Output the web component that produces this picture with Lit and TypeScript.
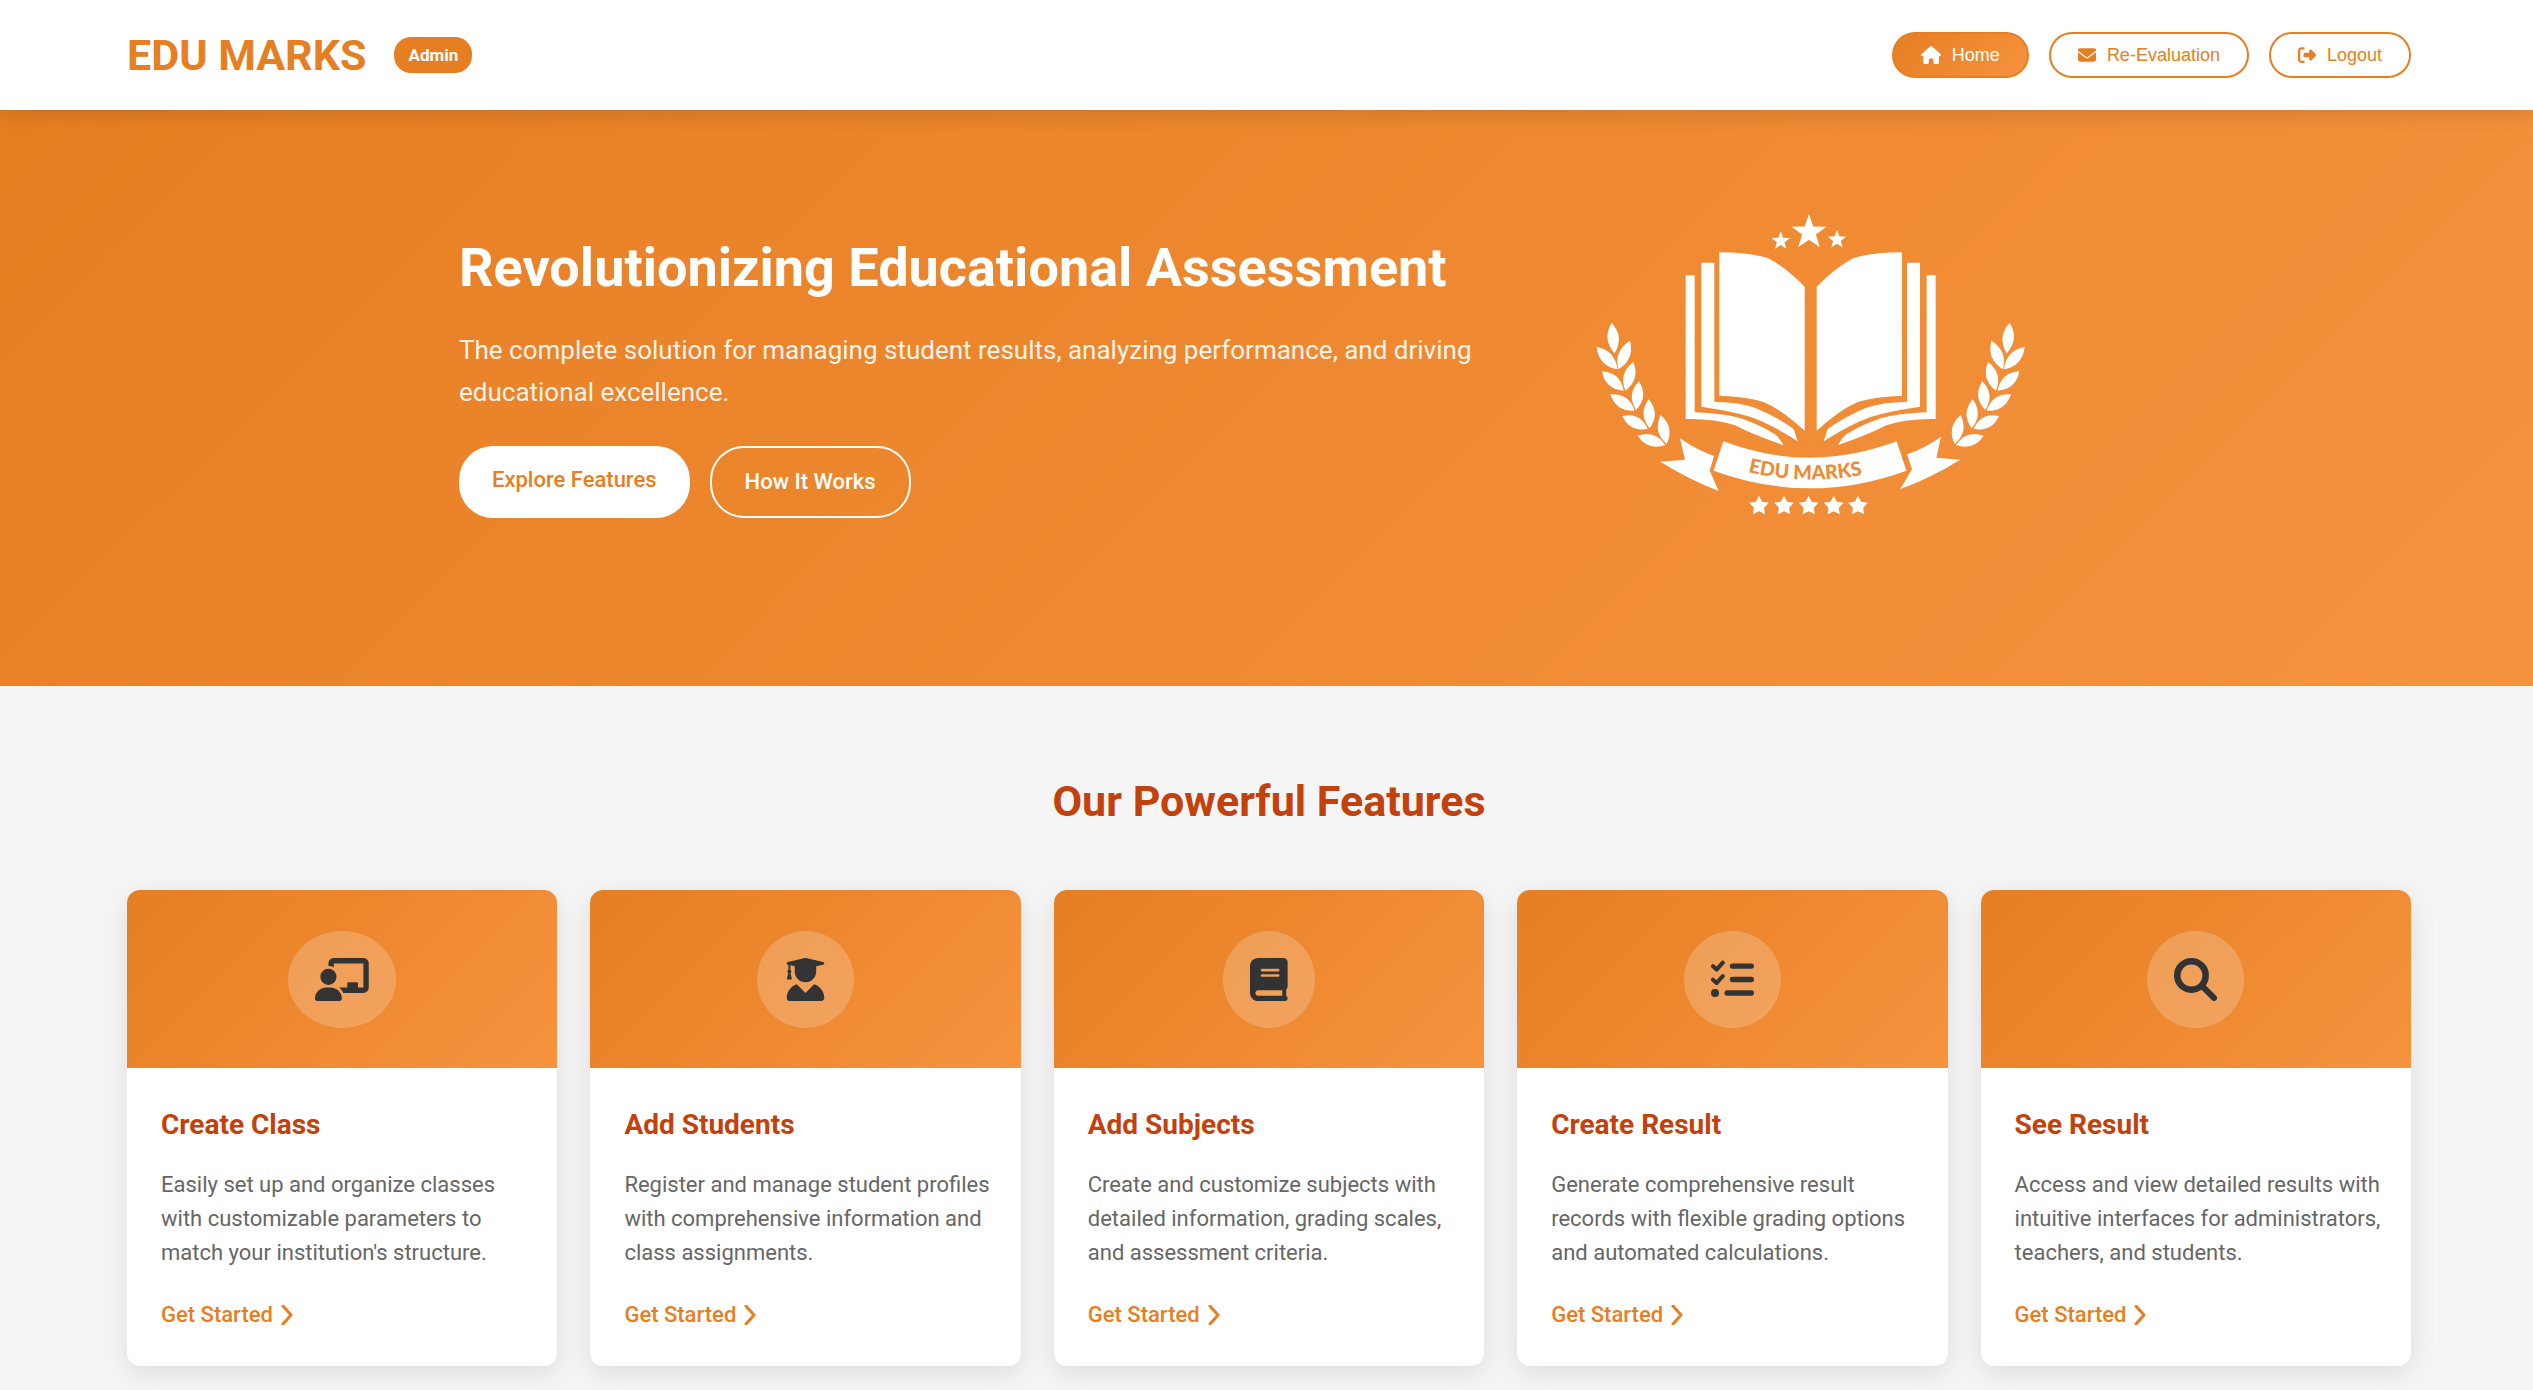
import { LitElement, html, css, svg } from "lit";
import type { SVGTemplateResult } from "lit";
import { customElement, property } from "lit/decorators.js";

type Point = [number, number];

interface Glyph {
  width: number;
  art: SVGTemplateResult;
}

const glyphs: Record<string, Glyph> = {
  house: {
    width: 576,
    art: svg`<path d="M575.8 255.5c0 18-15 32.1-32 32.1h-32l.7 160.2c0 2.7-.2 5.4-.5 8.1V472c0 22.1-17.9 40-40 40H456c-1.1 0-2.2 0-3.3-.1c-1.4 .1-2.8 .1-4.2 .1H416 392c-22.1 0-40-17.9-40-40V448 384c0-17.7-14.3-32-32-32H256c-17.7 0-32 14.3-32 32v64 24c0 22.1-17.9 40-40 40H160 128.1c-1.5 0-3-.1-4.5-.2c-1.2 .1-2.4 .2-3.6 .2H104c-22.1 0-40-17.9-40-40V360c0-.9 0-1.9 .1-2.8V287.6H32c-18 0-32-14-32-32.1c0-9 3-17 10-24L266.4 8c7-7 15-8 22-8s15 2 21 7L564.8 231.5c8 7 12 15 11 24z"/>`,
  },
  envelope: {
    width: 512,
    art: svg`<path d="M48 64C21.5 64 0 85.5 0 112c0 15.1 7.1 29.3 19.2 38.4L236.8 313.6c11.4 8.5 27 8.5 38.4 0L492.8 150.4c12.1-9.1 19.2-23.3 19.2-38.4c0-26.5-21.5-48-48-48H48zM0 176V384c0 35.3 28.7 64 64 64H448c35.3 0 64-28.7 64-64V176L294.4 339.2c-22.8 17.1-54 17.1-76.8 0L0 176z"/>`,
  },
  exit: {
    width: 512,
    art: svg`<path d="M377.9 105.9L500.7 228.7c7.2 7.2 11.3 17.1 11.3 27.3s-4.1 20.1-11.3 27.3L377.9 406.1c-6.4 6.4-15 9.9-24 9.9c-18.7 0-33.9-15.2-33.9-33.9l0-62.1-128 0c-17.7 0-32-14.3-32-32l0-64c0-17.7 14.3-32 32-32l128 0 0-62.1c0-18.7 15.2-33.9 33.9-33.9c9 0 17.6 3.6 24 9.9zM160 96L96 96c-17.7 0-32 14.3-32 32l0 256c0 17.7 14.3 32 32 32l64 0c17.7 0 32 14.3 32 32s-14.3 32-32 32l-64 0c-53 0-96-43-96-96L0 128C0 75 43 32 96 32l64 0c17.7 0 32 14.3 32 32s-14.3 32-32 32z"/>`,
  },
  teacher: {
    width: 640,
    art: svg`<path d="M160 64c0-35.3 28.7-64 64-64H576c35.3 0 64 28.7 64 64V352c0 35.3-28.7 64-64 64H336.8c-11.8-25.5-29.9-47.5-52.4-64H384V304c0-8.8 7.2-16 16-16h96c8.800 0 16 7.200 16 16v48h64V64L224 64v49.1C205.2 102.2 183.3 96 160 96V64zm0 64a96 96 0 1 1 0 192 96 96 0 1 1 0-192zM133.3 352h53.3C260.3 352 320 411.7 320 485.3c0 14.7-11.9 26.7-26.7 26.7H26.7C11.9 512 0 500.1 0 485.3C0 411.7 59.7 352 133.3 352z"/>`,
  },
  graduate: {
    width: 512,
    art: svg`<path d="M45.63 79.75L52 81.25v58.5C45 143.9 40 151.3 40 160c0 8.375 4.625 15.38 11.12 19.75L35.5 242C33.75 248.9 37.63 256 43.13 256h41.75c5.5 0 9.375-7.125 7.625-13.1L76.88 179.8C83.38 175.4 88 168.4 88 160c0-8.75-5-16.12-12-20.25V87.13L128 99.63l.001 60.37c0 70.75 57.25 128 128 128s127.1-57.25 127.1-128L384 99.62l82.25-19.87c18.25-4.375 18.25-27 0-31.5l-190.4-46c-13-3-26.62-3-39.63 0l-190.6 46C27.5 52.63 27.5 75.38 45.63 79.75zM359.2 312.8l-103.2 103.2l-103.2-103.2c-69.93 22.3-120.8 87.2-120.8 164.5C32 496.5 47.53 512 66.67 512h378.7C464.5 512 480 496.5 480 477.3C480 400 429.1 335.1 359.2 312.8z"/>`,
  },
  book: {
    width: 448,
    art: svg`<path d="M448 336v-288C448 21.49 426.5 0 400 0H96C42.98 0 0 42.98 0 96v320c0 53.02 42.98 96 96 96h320c17.67 0 32-14.33 32-31.1c0-11.72-6.607-21.52-16-27.1v-81.36C441.8 362.8 448 350.2 448 336zM143.1 128h192C344.8 128 352 135.2 352 144C352 152.8 344.8 160 336 160H143.1C135.2 160 128 152.8 128 144C128 135.2 135.2 128 143.1 128zM143.1 192h192C344.8 192 352 199.2 352 208C352 216.8 344.8 224 336 224H143.1C135.2 224 128 216.8 128 208C128 199.2 135.2 192 143.1 192zM384 448H96c-17.67 0-32-14.33-32-32c0-17.67 14.33-32 32-32h288V448z"/>`,
  },
  checklist: {
    width: 512,
    art: svg`<g fill="none" stroke="currentColor" stroke-linecap="round" stroke-linejoin="round">
      <path stroke-width="48" d="M24 98L67 138L140 56M24 258L67 298L140 216"/>
      <path stroke-width="64" d="M256 96H480M256 256H480M192 416H480"/>
    </g><circle cx="48" cy="416" r="48"/>`,
  },
  search: {
    width: 512,
    art: svg`<g fill="none" stroke="currentColor" stroke-linecap="round">
      <circle cx="208" cy="208" r="169" stroke-width="78"/>
      <path stroke-width="72" d="M335 335L476 476"/>
    </g>`,
  },
};

@customElement("edu-icon")
class EduIcon extends LitElement {
  @property() name = "house";

  static styles = css`
    :host {
      display: inline-flex;
      height: 1em;
    }
    .glyph {
      display: block;
      height: 1em;
      fill: currentColor;
    }
  `;

  render() {
    const { width, art } = glyphs[this.name];
    return html`<svg class="glyph" viewBox="0 0 ${width} 512" aria-hidden="true">${art}</svg>`;
  }
}

/** Pointed leaf running from tip to base, half as wide as `spread`. */
function leaf([tx, ty]: Point, [bx, by]: Point, spread = 34) {
  const length = Math.hypot(bx - tx, by - ty);
  const nx = (-(by - ty) / length) * spread;
  const ny = ((bx - tx) / length) * spread;
  const mx = (tx + bx) / 2;
  const my = (ty + by) / 2;
  return `M${tx} ${ty}Q${mx + nx} ${my + ny} ${bx} ${by}Q${mx - nx} ${my - ny} ${tx} ${ty}Z`;
}

function star(cx: number, cy: number, radius: number, inner: number) {
  const corners: string[] = [];
  for (let i = 0; i < 10; i++) {
    const r = i % 2 ? radius * inner : radius;
    const angle = (Math.PI / 5) * i - Math.PI / 2;
    corners.push(`${(cx + r * Math.cos(angle)).toFixed(1)},${(cy + r * Math.sin(angle)).toFixed(1)}`);
  }
  return svg`<polygon points=${corners.join(" ")} />`;
}

const laurel = [
  leaf([95, 368], [104, 460]),
  leaf([50, 441], [112, 508]),
  leaf([66, 514], [131, 572]),
  leaf([91, 583], [164, 632]),
  leaf([127, 648], [203, 686]),
  leaf([173, 707], [256, 735]),
  leaf([150, 422], [115, 508]),
  leaf([160, 486], [136, 572]),
  leaf([177, 544], [168, 630]),
  leaf([206, 598], [209, 685]),
  leaf([242, 645], [260, 732]),
].join("");

const pages =
  "M418 157Q520 158 568 176Q620 205 674 260V692Q600 625 548 605Q500 590 418 587Z" +
  "M364 188H403V605Q480 607 525 623Q590 650 641 687L653 724Q570 670 510 650Q440 630 364 620Z" +
  "M317 226H344V637Q430 640 482 655Q540 675 585 703Q600 715 610 735Q520 705 465 676Q400 655 317 657Z";

@customElement("edu-crest")
class EduCrest extends LitElement {
  static styles = css`
    :host {
      display: block;
    }
    .crest {
      display: block;
      width: 499px;
      height: 360px;
      fill: #fff;
    }
    .motto {
      font: 900 59px Lato, "Open Sans", sans-serif;
      fill: #f08b34;
    }
  `;

  render() {
    const half = svg`<path d=${laurel} /><path d=${pages} />`;
    return html`
      <svg class="crest" viewBox="0 -27 1497 1080" role="img" aria-label="EDU MARKS">
        <g>${half}</g>
        <g transform="translate(1384 0) scale(-1 1)">${half}</g>
        ${star(687, 97, 55, 0.4)} ${star(602, 123, 29, 0.42)} ${star(771, 119, 29, 0.42)}
        ${[537, 612, 686, 761, 834].map((x) => star(x, 918, 31, 0.52))}
        <path d="M430 724Q690 822 950 724L979 812Q690 918 401 812Z" />
        <path d="M300 715Q350 750 402 768L389 812L416 873Q330 840 241 785L315 779Z" />
        <path d="M1083 710Q1034 745 981 763L996 808L961 867Q1050 835 1141 779L1069 773Z" />
        <path id="motto-line" fill="none" d="M504 816Q690 860 880 818" />
        <text class="motto"><textPath href="#motto-line">EDU MARKS</textPath></text>
      </svg>
    `;
  }
}

@customElement("feature-card")
class FeatureCard extends LitElement {
  @property() icon = "book";
  @property() heading = "";
  @property() text = "";

  static styles = css`
    :host {
      display: flex;
      flex-direction: column;
      overflow: hidden;
      border-radius: 13px;
      background: #fff;
      box-shadow: 0 7px 27px rgba(0, 0, 0, 0.1);
    }
    .banner {
      display: flex;
      justify-content: center;
      padding: 41px 0 40px;
      background: linear-gradient(135deg, #e67e22, #f6933f);
    }
    .disc {
      padding: 27px;
      border-radius: 50%;
      background: rgba(255, 255, 255, 0.2);
      color: #333;
      font-size: 43px;
    }
    .disc edu-icon {
      display: flex;
    }
    .body {
      padding: 34px 24px 34px 34px;
    }
    .title {
      margin: 0 0 21px;
      color: #c2410c;
      font-size: 28px;
      font-weight: 700;
      line-height: 45px;
    }
    .text {
      margin: 0 0 28px;
      color: #666;
      font-size: 22px;
      line-height: 34px;
    }
    .more {
      display: flex;
      align-items: center;
      gap: 8px;
      width: fit-content;
      color: #e67e22;
      font-size: 22px;
      font-weight: 500;
      line-height: 34px;
      text-decoration: none;
    }
    .arrow {
      width: 12px;
      height: 20px;
      fill: none;
      stroke: currentColor;
      stroke-width: 3;
      stroke-linecap: round;
      stroke-linejoin: round;
    }
  `;

  render() {
    return html`
      <div class="banner">
        <div class="disc"><edu-icon name=${this.icon}></edu-icon></div>
      </div>
      <div class="body">
        <h3 class="title">${this.heading}</h3>
        <p class="text">${this.text}</p>
        <a class="more" href="#start"
          >Get Started<svg class="arrow" viewBox="0 0 12 20" aria-hidden="true">
            <path d="M2 1L10 10L2 19" /></svg
        ></a>
      </div>
    `;
  }
}

const features = [
  {
    icon: "teacher",
    heading: "Create Class",
    text: "Easily set up and organize classes with customizable parameters to match your institution's structure.",
  },
  {
    icon: "graduate",
    heading: "Add Students",
    text: "Register and manage student profiles with comprehensive information and class assignments.",
  },
  {
    icon: "book",
    heading: "Add Subjects",
    text: "Create and customize subjects with detailed information, grading scales, and assessment criteria.",
  },
  {
    icon: "checklist",
    heading: "Create Result",
    text: "Generate comprehensive result records with flexible grading options and automated calculations.",
  },
  {
    icon: "search",
    heading: "See Result",
    text: "Access and view detailed results with intuitive interfaces for administrators, teachers, and students.",
  },
];

@customElement("app-root")
class AppRoot extends LitElement {
  static styles = css`
    :host {
      display: block;
      min-height: 100vh;
      background: #f5f5f5;
      color: #333;
      font-family: Roboto, "Liberation Sans", sans-serif;
      --gutter-start: 127px;
      --gutter-end: 122px;
    }
    .topbar {
      position: relative;
      z-index: 1;
      display: flex;
      align-items: center;
      justify-content: space-between;
      padding: 32px var(--gutter-end) 32px var(--gutter-start);
      background: #fff;
      box-shadow: 0 3px 20px rgba(0, 0, 0, 0.15);
    }
    .brand {
      display: flex;
      align-items: center;
      gap: 28px;
      height: 46px;
    }
    .name {
      color: #e67e22;
      font-size: 43px;
      font-weight: 700;
    }
    .badge {
      padding: 0 14px;
      border-radius: 17px;
      background: #e67e22;
      color: #fff;
      font-size: 17px;
      font-weight: 700;
      line-height: 36px;
    }
    .nav {
      display: flex;
      gap: 20px;
    }
    .pill {
      display: flex;
      align-items: center;
      gap: 11px;
      height: 46px;
      padding: 0 27px;
      border: 2px solid #e67e22;
      border-radius: 27px;
      background: #fff;
      color: #e67e22;
      font: 18px "Liberation Sans", sans-serif;
    }
    .pill.current {
      background: linear-gradient(135deg, #e67e22, #f6933f);
      color: #fff;
    }
    .hero {
      padding: 81px var(--gutter-end) 135px var(--gutter-start);
      background: linear-gradient(135deg, #e67e22, #f6933f);
      color: #fff;
    }
    .pitch {
      display: flex;
      align-items: center;
      gap: 54px;
      max-width: 1620px;
      margin: 0 auto;
    }
    .words {
      flex: 1;
    }
    .headline {
      margin: 0 0 18px;
      font-size: 54px;
      font-weight: 700;
      line-height: 86px;
    }
    .lead {
      margin: 0 0 33px;
      font-size: 26px;
      line-height: 42px;
      opacity: 0.9;
    }
    .actions {
      display: flex;
      gap: 20px;
    }
    .action {
      padding: 17px 33px;
      border-radius: 34px;
      background: #fff;
      color: #e67e22;
      font-size: 22px;
      font-weight: 500;
      line-height: 34px;
      text-decoration: none;
    }
    .action.outline {
      border: 2px solid #fff;
      background: none;
      color: #fff;
    }
    .features {
      padding: 81px var(--gutter-end) 24px var(--gutter-start);
    }
    .section-title {
      margin: 0 0 54px;
      color: #c2410c;
      font-size: 43px;
      font-weight: 700;
      line-height: 69px;
      text-align: center;
    }
    .grid {
      display: grid;
      grid-template-columns: repeat(auto-fit, minmax(380px, 1fr));
      gap: 33px;
    }
  `;

  render() {
    return html`
      <header class="topbar">
        <div class="brand">
          <span class="name">EDU MARKS</span>
          <span class="badge">Admin</span>
        </div>
        <nav class="nav">
          <button class="pill current" type="button"><edu-icon name="house"></edu-icon>Home</button>
          <button class="pill" type="button"><edu-icon name="envelope"></edu-icon>Re-Evaluation</button>
          <button class="pill" type="button"><edu-icon name="exit"></edu-icon>Logout</button>
        </nav>
      </header>
      <section class="hero">
        <div class="pitch">
          <div class="words">
            <h1 class="headline">Revolutionizing Educational Assessment</h1>
            <p class="lead">
              The complete solution for managing student results, analyzing performance, and driving
              educational excellence.
            </p>
            <div class="actions">
              <a class="action" href="#features">Explore Features</a>
              <a class="action outline" href="#how">How It Works</a>
            </div>
          </div>
          <edu-crest></edu-crest>
        </div>
      </section>
      <section class="features" id="features">
        <h2 class="section-title">Our Powerful Features</h2>
        <div class="grid">
          ${features.map(
            (f) => html`<feature-card .icon=${f.icon} .heading=${f.heading} .text=${f.text}></feature-card>`
          )}
        </div>
      </section>
    `;
  }
}
